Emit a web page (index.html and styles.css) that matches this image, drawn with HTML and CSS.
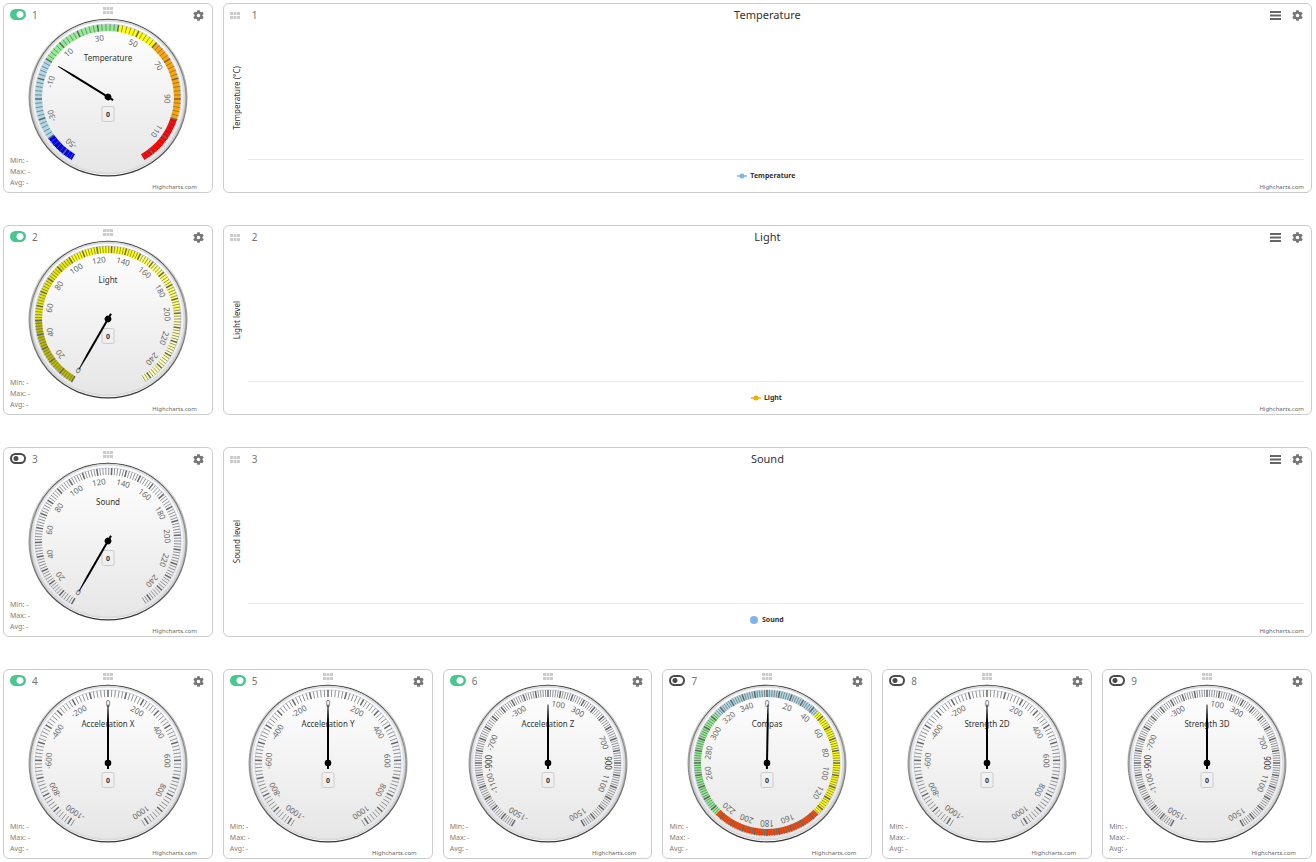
FILE: index.html
```html
<!DOCTYPE html>
<html lang="en">
<head>
<meta charset="utf-8">
<title>Sensor dashboard</title>
<link rel="stylesheet" href="styles.css">
</head>
<body>
<svg class="defs" width="0" height="0" aria-hidden="true">
  <defs>
    <linearGradient id="rim-outer" x1="0" y1="0" x2="0" y2="1"><stop offset="0" stop-color="#fff"/><stop offset="1" stop-color="#333"/></linearGradient>
    <linearGradient id="rim-inner" x1="0" y1="0" x2="0" y2="1"><stop offset="0" stop-color="#333"/><stop offset="1" stop-color="#fff"/></linearGradient>
    <linearGradient id="face" x1="0" y1="0" x2="0" y2="1"><stop offset="0" stop-color="#fff"/><stop offset="1" stop-color="#e6e6e6"/></linearGradient>
    <symbol id="gear" viewBox="2 2 20 20"><path d="M19.14 12.94c.04-.3.06-.61.06-.94 0-.32-.02-.64-.07-.94l2.03-1.58c.18-.14.23-.41.12-.61l-1.92-3.32c-.12-.22-.37-.29-.59-.22l-2.39.96c-.5-.38-1.03-.7-1.62-.94l-.36-2.54c-.04-.24-.24-.41-.48-.41h-3.84c-.24 0-.43.17-.47.41l-.36 2.54c-.59.24-1.13.57-1.62.94l-2.39-.96c-.22-.08-.47 0-.59.22L2.74 8.87c-.12.21-.08.47.12.61l2.03 1.58c-.05.3-.09.63-.09.94s.02.64.07.94l-2.03 1.58c-.18.14-.23.41-.12.61l1.92 3.32c.12.22.37.29.59.22l2.39-.96c.5.38 1.03.7 1.62.94l.36 2.54c.05.24.24.41.48.41h3.84c.24 0 .44-.17.47-.41l.36-2.54c.59-.24 1.13-.56 1.62-.94l2.39.96c.22.08.47 0 .59-.22l1.92-3.32c.12-.22.07-.47-.12-.61l-2.01-1.58zM12 15.2c-1.77 0-3.2-1.43-3.2-3.2s1.43-3.2 3.2-3.2 3.2 1.43 3.2 3.2-1.43 3.2-3.2 3.2z"/></symbol>
    <symbol id="grip" viewBox="0 0 10 7"><path d="M0 0h3v3H0zM3.500 0h3v3h-3zM7 0h3v3H7zM0 4h3v3H0zM3.500 4h3v3h-3zM7 4h3v3H7z"/></symbol>
    <symbol id="bars" viewBox="0 0 11 9"><path d="M0 0h11v2H0zM0 3.500h11v2H0zM0 7h11v2H0z"/></symbol>
  </defs>
</svg>
<main class="board" id="board"></main>
<script src="app.js"></script>
</body>
</html>
```
FILE: styles.css
```css
* {
  box-sizing: border-box;
}

body {
  margin: 0;
  background: #fff;
  color: #333;
  font-family: "Noto Sans", "Open Sans", sans-serif;
}

button {
  display: flex;
  margin: 0;
  padding: 0;
  border: 0;
  background: none;
  cursor: pointer;
}

.defs {
  display: block;
}

.board {
  display: grid;
  grid-template-columns: repeat(6, 1fr);
  gap: 32px 10px;
  padding: 3px 4px 3px 3px;
}

.card {
  display: grid;
  min-height: 190px;
  border: 1px solid #ccc;
  border-radius: 6px;
}

.card > * {
  grid-area: 1 / 1;
}

.card-wide {
  grid-column: span 5;
}

.head {
  align-self: start;
  z-index: 1;
  display: grid;
  grid-template-columns: 1fr auto 1fr;
  padding: 3px 6px 0;
}

.lead {
  display: flex;
  align-items: center;
  gap: 6px;
}

.number {
  color: #757575;
  font-size: 10px;
  line-height: 16px;
}

.toggle {
  appearance: none;
  width: 16px;
  height: 11px;
  margin: 0 0 2px;
  border: 2px solid #4a4a4a;
  border-radius: 6px;
  background: radial-gradient(circle at 4px 50%, #4a4a4a 2px, #fff 3px);
}

.toggle:checked {
  border-color: #48c78e;
  background: radial-gradient(circle at 8px 50%, #fff 3px, #48c78e 4px);
}

.grip {
  width: 10px;
  height: 7px;
  fill: #ccc;
}

.grip-button {
  align-items: flex-start;
}

.tools {
  display: flex;
  align-items: center;
  justify-content: flex-end;
  gap: 11px;
  padding-right: 2px;
}

.tools .gear {
  width: 11px;
  height: 11px;
  fill: #757575;
}

.tools .bars {
  width: 11px;
  height: 9px;
  fill: #666;
}

.gauge {
  justify-self: center;
  width: 162px;
  height: 162px;
  margin-top: 12px;
}

.gauge text {
  font-size: 8px;
  text-anchor: middle;
  dominant-baseline: central;
}

.gauge .tick-label {
  fill: #666;
}

.gauge .tick-label-strong {
  fill: #333;
}

.gauge .gauge-title {
  fill: #333;
}

.gauge .value {
  fill: #333;
  font-size: 7px;
  font-weight: 700;
}

.foot {
  align-self: end;
  display: flex;
  align-items: flex-end;
  justify-content: space-between;
  padding: 0 15px 1px 6px;
}

.stats {
  margin: 0;
  padding: 0 0 3px;
  color: #808080;
  font-size: 7px;
  line-height: 11px;
  list-style: none;
}

.credits {
  color: #666;
  font-size: 6px;
  line-height: 8px;
  text-decoration: none;
}

.card-wide .lead {
  gap: 12px;
}

.chart-title {
  margin: 0;
  color: #333;
  font-size: 11px;
  font-weight: 400;
  line-height: 16px;
}

.plot {
  display: grid;
  grid-template-columns: 12px 1fr;
  gap: 5px;
  margin: 20px 7px 32px;
}

.axis-title {
  align-self: center;
  justify-self: center;
  margin-top: 12px;
  color: #333;
  font-size: 8px;
  line-height: 12px;
  white-space: nowrap;
  writing-mode: vertical-rl;
  transform: rotate(180deg);
}

.plot-area {
  border-bottom: 1px solid #e6e8f2;
}

.legend {
  align-self: end;
  justify-self: center;
  display: flex;
  align-items: center;
  gap: 3px;
  padding: 0 2px 10px 0;
  color: #333;
  font-size: 7px;
  font-weight: 700;
  line-height: 12px;
}

.legend svg {
  width: 10px;
  height: 8px;
}

.card-wide .foot {
  justify-content: flex-end;
  padding-right: 7px;
}
```
FILE: app.js
```js
const DEG = Math.PI / 180;
const R = 73;
const BAND = 7;

const temperatureBands = [
  [-55, -40, '#0000ff'], [-40, 0, '#add8e6'], [0, 40, '#90ee90'],
  [40, 60, '#ffff00'], [60, 100, '#ffa500'], [100, 125, '#ff0000']
];
const lightBands = [
  [0, 50, '#b8b800'], [50, 100, '#e6e600'], [100, 150, '#ffff00'],
  [150, 200, '#ffff66'], [200, 255, '#ffffb3']
];
const compassBands = [
  [0, 45, '#add8e6'], [45, 135, '#ffff00'], [135, 225, '#ff4500'],
  [225, 315, '#90ee90'], [315, 360, '#add8e6']
];

const range = (from, to, step) => {
  const out = [];
  for (let v = from; v <= to; v += step) out.push(v);
  return out;
};

const accel = { min: -1024, max: 1024, major: 100, labels: range(-1000, 1000, 200) };
const wide = { min: -1500, max: 1500, major: 100, labels: [-1500, -1100, -900, -700, -300, 100, 300, 700, 900, 1100, 1500], strong: [-900, 900] };

const gauges = [
  { title: 'Temperature', on: true, min: -55, max: 125, major: 10, labels: range(-50, 110, 20), bands: temperatureBands,
    chart: { axis: 'Temperature (°C)', color: '#7cb5ec', line: true } },
  { title: 'Light', on: true, min: 0, max: 255, major: 10, labels: range(0, 240, 20), bands: lightBands,
    chart: { axis: 'Light level', color: '#f0b000', line: true } },
  { title: 'Sound', on: false, min: 0, max: 255, major: 10, labels: range(0, 240, 20),
    chart: { axis: 'Sound level', color: '#7cb5ec', line: false } },
  { title: 'Acceleration X', on: true, ...accel },
  { title: 'Acceleration Y', on: true, ...accel },
  { title: 'Acceleration Z', on: true, ...wide },
  { title: 'Compas', on: false, min: 0, max: 360, major: 10, start: 0, end: 360, needle: 1,
    labels: range(0, 340, 20).filter(v => v !== 140 && v !== 240), bands: compassBands },
  { title: 'Strength 2D', on: false, ...accel },
  { title: 'Strength 3D', on: false, ...wide }
];

const point = (angle, r) => `${(Math.sin(angle * DEG) * r).toFixed(2)} ${(-Math.cos(angle * DEG) * r).toFixed(2)}`;

function band(a, b, color) {
  const large = b - a > 180 ? 1 : 0;
  const inner = R - BAND;
  return `<path fill="${color}" d="M${point(a, R)}A${R} ${R} 0 ${large} 1 ${point(b, R)}L${point(b, inner)}A${inner} ${inner} 0 ${large} 0 ${point(a, inner)}Z"/>`;
}

function gaugeSvg(g) {
  const start = g.start ?? -150;
  const end = g.end ?? 150;
  const angle = v => start + (v - g.min) / (g.max - g.min) * (end - start);
  const minor = g.major / 5;
  let minorPath = '';
  let majorPath = '';
  for (let k = Math.ceil(g.min / minor); k * minor <= g.max; k++) {
    const a = angle(k * minor);
    const seg = `M${point(a, R)}L${point(a, R - BAND)}`;
    if (k % 5 === 0) majorPath += seg; else minorPath += seg;
  }
  const bands = (g.bands || []).map(([a, b, c]) => band(angle(a), angle(b), c)).join('');
  const labels = g.labels.map(v => {
    const strong = g.strong && g.strong.includes(v) ? ' tick-label-strong' : '';
    return `<text class="tick-label${strong}" transform="rotate(${angle(v).toFixed(2)}) translate(0 -60)">${v}</text>`;
  }).join('');
  const axis = end - start === 360
    ? `<circle r="${R}" fill="none" stroke="#ccd6eb"/>`
    : `<path fill="none" stroke="#ccd6eb" d="M${point(start, R)}A${R} ${R} 0 1 1 ${point(end, R)}"/>`;
  return `<svg class="gauge" viewBox="-81 -81 162 162" role="img" aria-label="${g.title}">
    <circle r="79.500" fill="url(#rim-outer)"/>
    <circle r="78.300" fill="url(#rim-inner)"/>
    <circle r="77" fill="url(#face)" stroke="#ccc" stroke-width=".8"/>
    <circle r="76" fill="none" stroke="#ddd" stroke-width="1.500"/>
    ${bands}${axis}
    <path d="${minorPath}" stroke="#666" stroke-width=".7"/>
    <path d="${majorPath}" stroke="#666" stroke-width="1.500"/>
    <text class="gauge-title" y="-40">${g.title}</text>
    ${labels}
    <rect x="-6" y="9.500" width="12" height="15" rx="1.500" fill="none" stroke="#ccc"/>
    <text class="value" y="17">0</text>
    <g transform="rotate(${g.needle ?? angle(0).toFixed(2)})">
      <path d="M-1 6L-1 -41L-.4 -58.400H.4L1 -41V6Z"/>
      <circle r="3.300"/>
    </g>
  </svg>`;
}

const gear = '<button type="button" aria-label="Settings"><svg class="gear"><use href="#gear"/></svg></button>';
const grip = '<button type="button" class="grip-button" aria-label="Move"><svg class="grip"><use href="#grip"/></svg></button>';
const gripMiddle = grip.replace('grip-button', 'grip-button grip-middle');
const credits = '<a class="credits" href="#">Highcharts.com</a>';

function gaugeCard(g, n) {
  return `<section class="card">
    ${gaugeSvg(g)}
    <div class="head">
      <label class="lead"><input class="toggle" type="checkbox"${g.on ? ' checked' : ''}><span class="number">${n}</span></label>
      ${gripMiddle}
      <div class="tools">${gear}</div>
    </div>
    <div class="foot">
      <ul class="stats"><li>Min: -</li><li>Max: -</li><li>Avg: -</li></ul>
      ${credits}
    </div>
  </section>`;
}

function chartCard(g, n) {
  const c = g.chart;
  const marker = c.line
    ? `<path d="M0 4H10" stroke="${c.color}" stroke-width="1.500"/><circle cx="5" cy="4" r="2.500" fill="${c.color}"/>`
    : `<circle cx="5" cy="4" r="4" fill="${c.color}"/>`;
  return `<section class="card card-wide">
    <div class="plot"><div class="axis-title">${c.axis}</div><div class="plot-area"></div></div>
    <div class="head">
      <div class="lead">${grip}<span class="number">${n}</span></div>
      <h2 class="chart-title">${g.title}</h2>
      <div class="tools"><button type="button" aria-label="Chart menu"><svg class="bars"><use href="#bars"/></svg></button>${gear}</div>
    </div>
    <div class="legend"><svg viewBox="0 0 10 8">${marker}</svg>${g.title}</div>
    <div class="foot">${credits}</div>
  </section>`;
}

document.getElementById('board').innerHTML = gauges
  .map((g, i) => gaugeCard(g, i + 1) + (g.chart ? chartCard(g, i + 1) : ''))
  .join('');
```
